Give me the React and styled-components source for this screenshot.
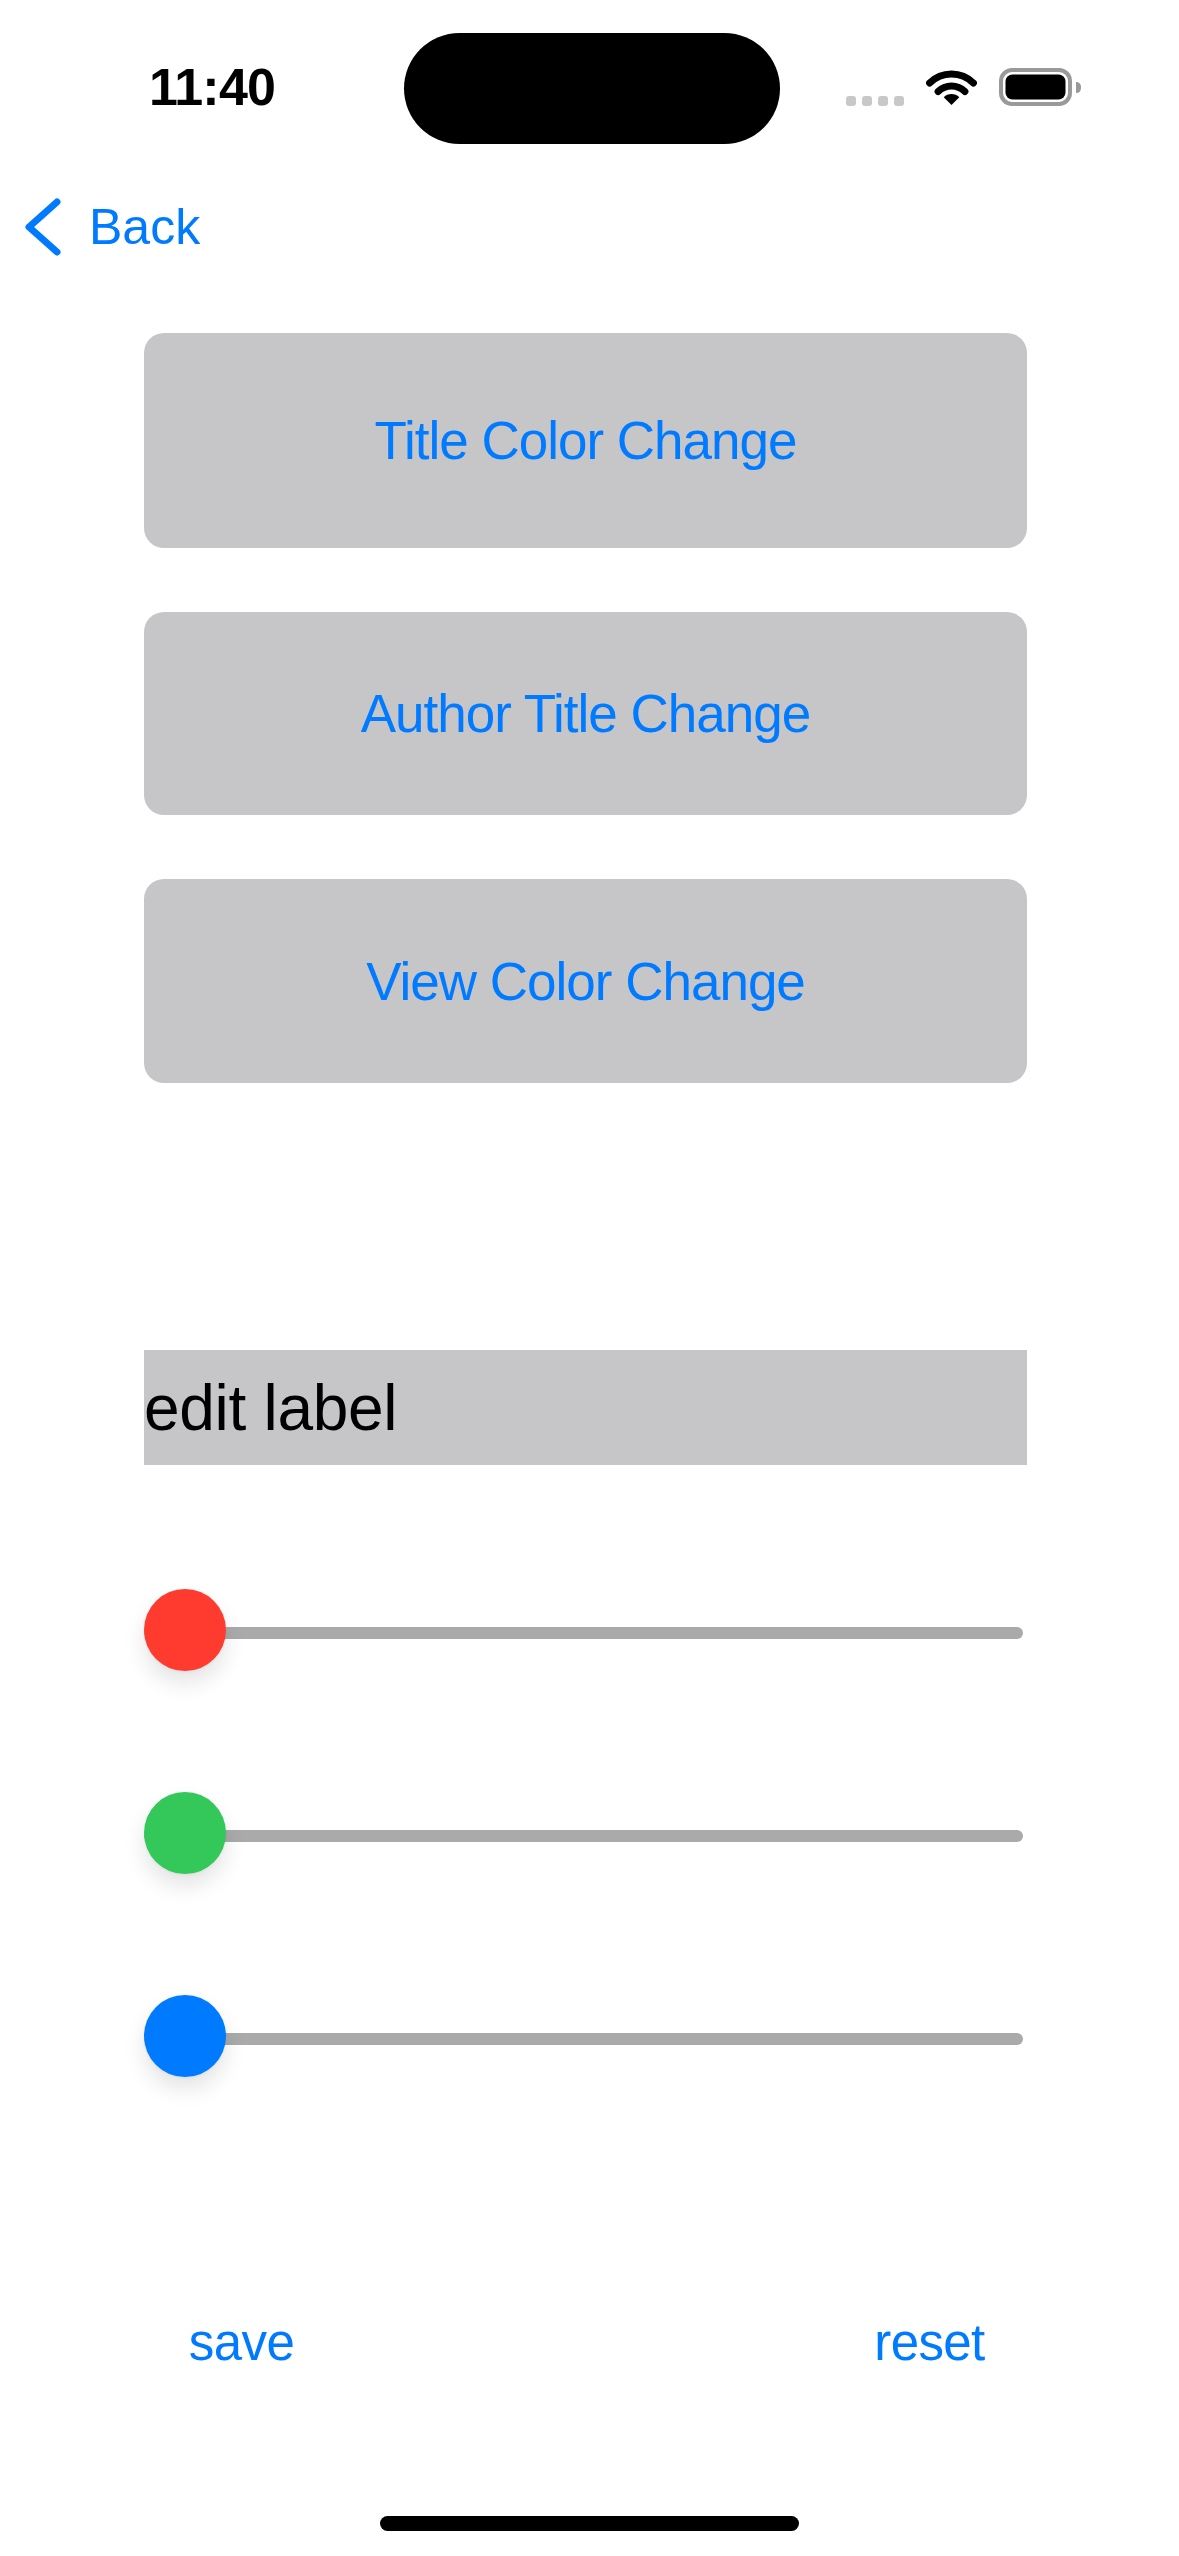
import React from 'react';
import styled, { createGlobalStyle } from 'styled-components';

const GlobalStyle = createGlobalStyle`
    html, body {
        margin: 0;
        padding: 0;
        background: #ffffff;
    }
    body {
        font-family: "Liberation Sans", Arial, sans-serif;
    }
`

const Screen = styled.div`
    width: 1179px;
    height: 2556px;
    display: flex;
    flex-direction: column;
    background: #ffffff;
    overflow: hidden;
`
const StatusBar = styled.div`
    height: 111px;
    margin-top: 33px;
    display: flex;
    align-items: center;
`
const Time = styled.div`
    width: 255px;
    margin-left: 149px;
    margin-top: -3px;
    font-size: 52px;
    font-weight: 700;
    letter-spacing: -0.8px;
    color: #000;
`
const Island = styled.div`
    width: 376px;
    height: 111px;
    border-radius: 56px;
    background: #000;
`
const StatusIcons = styled.div`
    margin-left: 66px;
    display: flex;
    align-items: flex-end;
    gap: 22px;
    height: 38px;
    margin-top: -3px;
`
const Dots = styled.div`
    display: flex;
    gap: 6px;
`
const Dot = styled.span`
    width: 10px;
    height: 10px;
    border-radius: 3px;
    background: #c8c8c8;
`
const NavBar = styled.div`
    margin-top: 54px;
    height: 58px;
    padding-left: 25px;
    display: flex;
    align-items: center;
    gap: 26px;
`
const BackLabel = styled.span`
    font-size: 50px;
    color: #007aff;
`
const Content = styled.div`
    width: 883px;
    margin-left: 144px;
    margin-top: 77px;
    display: flex;
    flex-direction: column;
`
const ButtonStack = styled.div`
    display: flex;
    flex-direction: column;
    gap: 64px;
`
const GrayButton = styled.div`
    height: ${props => props.$h}px;
    border-radius: 20px;
    background: #c6c6c8;
    display: flex;
    align-items: center;
    justify-content: center;
    font-size: 53px;
    letter-spacing: -1px;
    color: #007aff;
`
const EditLabel = styled.div`
    margin-top: 267px;
    height: 115px;
    background: #c6c6c8;
    display: flex;
    align-items: center;
    font-size: 64px;
    letter-spacing: -0.3px;
    color: #000;
`
const SliderList = styled.div`
    margin-top: 124px;
    display: flex;
    flex-direction: column;
    gap: 121px;
`
const SliderRow = styled.div`
    position: relative;
    height: 82px;
    display: flex;
    align-items: center;
`
const Track = styled.div`
    flex: 1;
    height: 12px;
    margin-top: 6px;
    margin-right: 4px;
    border-radius: 6px;
    background: #aaaaaa;
`
const Thumb = styled.div`
    position: absolute;
    top: 0;
    width: 82px;
    height: 82px;
    border-radius: 50%;
    background: ${props => props.$color};
    box-shadow: 0 12px 22px rgba(0, 0, 0, 0.11), 0 1px 3px rgba(0, 0, 0, 0.05);
`
const BottomBar = styled.div`
    margin-top: 236px;
    display: flex;
    justify-content: space-between;
`
const TextButton = styled.div`
    width: 195px;
    text-align: center;
    font-size: 51px;
    line-height: 60px;
    letter-spacing: -0.6px;
    color: #007aff;
`
const HomeIndicator = styled.div`
    margin-top: auto;
    margin-bottom: 25px;
    align-self: center;
    width: 419px;
    height: 15px;
    border-radius: 8px;
    background: #000;
`

const WifiIcon = () => (
    <svg width="51" height="38" viewBox="0 0 51 38">
        <path d="M3.6 15.1 A31 31 0 0 1 47.4 15.1" fill="none" stroke="#000" strokeWidth="7" strokeLinecap="round" />
        <path d="M12.1 23.6 A19 19 0 0 1 38.9 23.6" fill="none" stroke="#000" strokeWidth="7" strokeLinecap="round" />
        <path d="M25.5 37 L17.7 29.2 A11 11 0 0 1 33.3 29.2 Z" fill="#000" />
    </svg>
)

const BatteryIcon = () => (
    <svg width="82" height="38" viewBox="0 0 82 38">
        <rect x="2" y="2" width="69" height="34" rx="11" fill="none" stroke="#999" strokeWidth="4" />
        <rect x="6.5" y="6.5" width="60" height="25" rx="7" fill="#000" />
        <path d="M77 14 Q82 14 82 19.5 Q82 25 77 25 Z" fill="#999" />
    </svg>
)

const Chevron = () => (
    <svg width="38" height="58" viewBox="0 0 38 58">
        <polyline points="32,4 4,29 32,54" fill="none" stroke="#007aff" strokeWidth="7" strokeLinecap="round" strokeLinejoin="round" />
    </svg>
)

const sliders = [
    { id: "r", color: "#ff3b30", value: 0 },
    { id: "g", color: "#34c759", value: 0 },
    { id: "b", color: "#007aff", value: 0 },
];

const App = () => {
    return (
        <Screen>
            <GlobalStyle />
            <StatusBar>
                <Time>11:40</Time>
                <Island />
                <StatusIcons>
                    <Dots>
                        <Dot /><Dot /><Dot /><Dot />
                    </Dots>
                    <WifiIcon />
                    <BatteryIcon />
                </StatusIcons>
            </StatusBar>
            <NavBar>
                <Chevron />
                <BackLabel>Back</BackLabel>
            </NavBar>
            <Content>
                <ButtonStack>
                    <GrayButton $h={215}>Title Color Change</GrayButton>
                    <GrayButton $h={203}>Author Title Change</GrayButton>
                    <GrayButton $h={204}>View Color Change</GrayButton>
                </ButtonStack>
                <EditLabel>edit label</EditLabel>
                <SliderList>
                    {sliders.map((s) => (
                        <SliderRow key={s.id}>
                            <Track />
                            <Thumb $color={s.color} style={{ left: `${s.value * (883 - 82)}px` }} />
                        </SliderRow>
                    ))}
                </SliderList>
                <BottomBar>
                    <TextButton>save</TextButton>
                    <TextButton>reset</TextButton>
                </BottomBar>
            </Content>
            <HomeIndicator />
        </Screen>
    )
}

export default App
